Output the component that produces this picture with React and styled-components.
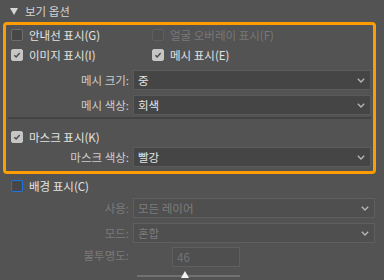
import React from 'react';
import styled, { createGlobalStyle } from 'styled-components';

const GlobalStyle = createGlobalStyle`
  body {
    margin: 0;
    background: #535353;
    font-family: "Noto Sans CJK KR", "Noto Sans", sans-serif;
    font-size: 11.5px;
  }
`;

const Check = ({ checked, disabled, focus }) => (
  <Box $checked={checked} $disabled={disabled} $focus={focus}>
    {checked && (
      <svg width="12" height="12" viewBox="0 0 12 12">
        <path d="M2.8 6.2 L5 8.4 L9.2 3.6" fill="none" stroke="#4b4b4b" strokeWidth="1.7" />
      </svg>
    )}
  </Box>
);

const Chevron = () => (
  <svg width="8" height="5" viewBox="0 0 8 5">
    <path d="M0.8 0.8 L4 4 L7.2 0.8" fill="none" stroke="#b8b8b8" strokeWidth="1.3" />
  </svg>
);

const Field = ({ label, value, disabled }) => (
  <FieldRow>
    <FieldLabel $disabled={disabled}>{label}</FieldLabel>
    <Select $disabled={disabled}>
      <span>{value}</span>
      <Chevron />
    </Select>
  </FieldRow>
);

const App = () => {
  return (
    <>
      <GlobalStyle />
      <Panel>
        <Header>
          <svg width="8" height="7" viewBox="0 0 8 7">
            <path d="M0 0 H8 L4 7 Z" fill="#d6d6d6" />
          </svg>
          <span>보기 옵션</span>
        </Header>

        <Group>
          <CheckPair>
            <CheckItem>
              <Check />
              <CheckText>안내선 표시(G)</CheckText>
            </CheckItem>
            <CheckItem>
              <Check disabled />
              <CheckText $disabled>얼굴 오버레이 표시(F)</CheckText>
            </CheckItem>
          </CheckPair>
          <CheckPair>
            <CheckItem>
              <Check checked />
              <CheckText>이미지 표시(I)</CheckText>
            </CheckItem>
            <CheckItem>
              <Check checked />
              <CheckText>메시 표시(E)</CheckText>
            </CheckItem>
          </CheckPair>
          <Fields>
            <Field label="메시 크기:" value="중" />
            <Field label="메시 색상:" value="회색" />
          </Fields>
          <Divider />
          <CheckPair>
            <CheckItem>
              <Check checked />
              <CheckText>마스크 표시(K)</CheckText>
            </CheckItem>
          </CheckPair>
          <Field label="마스크 색상:" value="빨강" />
        </Group>

        <Section>
          <CheckPair>
            <CheckItem>
              <Check focus />
              <CheckText>배경 표시(C)</CheckText>
            </CheckItem>
          </CheckPair>
          <Fields $top={2}>
            <Field label="사용:" value="모든 레이어" disabled />
            <Field label="모드:" value="혼합" disabled />
          </Fields>
          <OpacityRow>
            <FieldLabel $disabled>불투명도:</FieldLabel>
            <OpacityBlock>
              <NumberBox>46</NumberBox>
              <Track>
                <Thumb />
              </Track>
            </OpacityBlock>
          </OpacityRow>
        </Section>
      </Panel>
    </>
  );
};

const Panel = styled.div`
  width: 384px;
  height: 280px;
  overflow: hidden;
  background: #535353;
`;

const Header = styled.div`
  height: 22px;
  display: flex;
  align-items: center;
  gap: 7px;
  padding-left: 10px;
  color: #d4d4d4;
`;

const Group = styled.div`
  margin-left: 3px;
  width: 373px;
  box-sizing: border-box;
  border: 3px solid #ff9d00;
  border-radius: 4px;
  padding: 0 2px 4px 0;
`;

const Section = styled.div`
  padding: 2px 9px 0 6px;
`;

const CheckPair = styled.div`
  display: grid;
  grid-template-columns: 141px 1fr;
  height: 20px;
  padding-left: 5px;
`;

const CheckItem = styled.label`
  display: flex;
  align-items: center;
  gap: 6px;
`;

const Box = styled.span`
  width: 12px;
  height: 12px;
  box-sizing: border-box;
  border-radius: 2px;
  display: flex;
  align-items: center;
  justify-content: center;
  background: ${p => (p.$checked ? '#c6c6c6' : p.$disabled ? '#515151' : '#474747')};
  border: 1px solid
    ${p => (p.$focus ? '#1b74e4' : p.$checked ? '#c6c6c6' : p.$disabled ? '#5f5f5f' : '#6e6e6e')};
`;

const CheckText = styled.span`
  color: ${p => (p.$disabled ? '#787878' : '#e2e2e2')};
  white-space: nowrap;
`;

const Fields = styled.div`
  display: flex;
  flex-direction: column;
  gap: 5px;
  margin-top: ${p => (p.$top !== undefined ? p.$top : 5)}px;
`;

const FieldRow = styled.div`
  display: flex;
  align-items: center;
  gap: 4px;
  height: 20px;
`;

const FieldLabel = styled.span`
  width: 123px;
  flex-shrink: 0;
  text-align: right;
  color: ${p => (p.$disabled ? '#7a7a7a' : '#cdcdcd')};
`;

const Select = styled.div`
  flex: 1;
  height: 20px;
  box-sizing: border-box;
  display: flex;
  align-items: center;
  justify-content: space-between;
  padding: 0 5px 0 4px;
  background: ${p => (p.$disabled ? '#4f4f4f' : '#454545')};
  border: 1px solid ${p => (p.$disabled ? '#5f5f5f' : '#5a5a5a')};
  color: ${p => (p.$disabled ? '#7c7c7c' : '#e4e4e4')};
`;

const Divider = styled.div`
  height: 2px;
  margin: 2px 0 8px 2px;
  background: #434343;
`;

const OpacityRow = styled.div`
  display: flex;
  align-items: flex-start;
  gap: 4px;
  margin-top: 4px;
`;

const OpacityBlock = styled.div`
  width: 107px;
  display: flex;
  flex-direction: column;
  align-items: flex-end;
`;

const NumberBox = styled.div`
  width: 68px;
  height: 20px;
  box-sizing: border-box;
  display: flex;
  align-items: center;
  padding-left: 4px;
  background: #4f4f4f;
  border: 1px solid #5f5f5f;
  color: #747474;
`;

const Track = styled.div`
  position: relative;
  width: 103px;
  height: 2px;
  margin-top: 8px;
  background: #717171;
`;

const Thumb = styled.div`
  position: absolute;
  left: 44px;
  top: -4px;
  width: 0;
  height: 0;
  border-left: 4px solid transparent;
  border-right: 4px solid transparent;
  border-bottom: 7px solid #f2f2f2;
`;

export default App;
